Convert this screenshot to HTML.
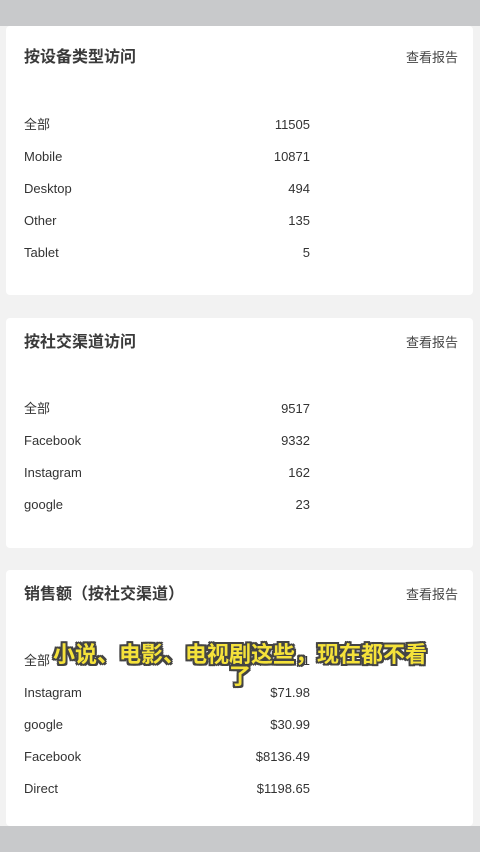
<!DOCTYPE html>
<html><head><meta charset="utf-8"><style>
body{margin:0;width:480px;height:852px;background:#f2f2f2;font-family:"Liberation Sans","Noto Sans CJK SC",sans-serif;position:relative;overflow:hidden;color:#333}
.top{position:absolute;left:0;top:0;width:480px;height:26px;background:#c8c9cb}
.bot{position:absolute;left:0;top:826px;width:480px;height:26px;background:#c8c9cb}
.card{position:absolute;left:6px;width:467px;background:#fff;border-radius:4px}
.t{position:absolute;left:18px;font-size:16px;line-height:18px;font-weight:bold;color:#3a3a3a}
.r{position:absolute;right:15px;font-size:13px;line-height:16px;color:#444}
.row{position:absolute;left:18px;width:286px;font-size:13px;line-height:16px;height:16px;color:#333;display:flex;justify-content:space-between;align-items:center}
.sub{position:absolute;left:0;width:480px;text-align:center;font-size:22px;font-weight:bold;color:#f5e23a;line-height:22px;
text-shadow:-2px -2px 0 #444,2px -2px 0 #444,-2px 2px 0 #444,2px 2px 0 #444,0 2px 0 #444,0 -2px 0 #444,2px 0 0 #444,-2px 0 0 #444}
</style></head><body>
<div class="top"></div>
<div class="card" style="top:26px;height:269px">
<div class="t" style="top:23px">按设备类型访问</div><div class="r" style="top:24px">查看报告</div>
<div class="row" style="top:91px"><span>全部</span><span>11505</span></div>
<div class="row" style="top:123px"><span>Mobile</span><span>10871</span></div>
<div class="row" style="top:155px"><span>Desktop</span><span>494</span></div>
<div class="row" style="top:187px"><span>Other</span><span>135</span></div>
<div class="row" style="top:219px"><span>Tablet</span><span>5</span></div>
</div>
<div class="card" style="top:318px;height:230px">
<div class="t" style="top:16px">按社交渠道访问</div><div class="r" style="top:17px">查看报告</div>
<div class="row" style="top:83px"><span>全部</span><span>9517</span></div>
<div class="row" style="top:115px"><span>Facebook</span><span>9332</span></div>
<div class="row" style="top:147px"><span>Instagram</span><span>162</span></div>
<div class="row" style="top:179px"><span>google</span><span>23</span></div>
</div>
<div class="card" style="top:570px;height:256px">
<div class="t" style="top:16px">销售额（按社交渠道）</div><div class="r" style="top:17px">查看报告</div>
<div class="row" style="top:83px"><span>全部</span><span>$9437.11</span></div>
<div class="row" style="top:115px"><span>Instagram</span><span>$71.98</span></div>
<div class="row" style="top:147px"><span>google</span><span>$30.99</span></div>
<div class="row" style="top:179px"><span>Facebook</span><span>$8136.49</span></div>
<div class="row" style="top:211px"><span>Direct</span><span>$1198.65</span></div>
</div>
<div class="sub" style="top:644px">小说、电影、电视剧这些，现在都不看<br>了</div>
<div class="bot"></div>
</body></html>
